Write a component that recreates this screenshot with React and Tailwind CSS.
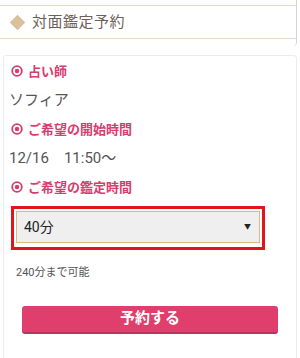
const Label = ({ children }) => (
  <div className="flex items-center h-[20px] pl-[7px] text-[13px] font-bold text-[#d63d6e] leading-none">
    <svg width="12" height="12" viewBox="0 0 12 12" className="mr-[5px]">
      <circle cx="6" cy="6" r="4.8" fill="none" stroke="#d63d6e" strokeWidth="1.8" />
      <circle cx="6" cy="6" r="2.2" fill="#d63d6e" />
    </svg>
    <span>{children}</span>
  </div>
);

export default function App() {
  return (
    <div
      className="w-[300px] h-[358px] bg-white overflow-hidden"
      style={{ fontFamily: "Roboto, 'Noto Sans CJK JP', sans-serif" }}
    >
      {/* page heading block */}
      <div className="pt-[5px] pb-[7px] mr-[3px] border-r border-[#d5d5d5] rounded-br-[4px]">
        <div className="h-[34px] border-t border-b border-[#ead9c2] flex items-center pl-[9px]">
          <div className="w-[11px] h-[11px] bg-[#dcbf9c] rotate-45 ml-[3px] mr-[9px]" />
          <span className="text-[15px] text-[#6e5f5a] tracking-[0.5px]">対面鑑定予約</span>
        </div>
      </div>

      {/* reservation card */}
      <div className="mt-[9px] mx-[3px] h-[310px] border border-[#ececec] rounded-[3px] pt-[5px]">
        <Label>占い師</Label>
        <div className="h-[38px] flex items-center pl-[5px] text-[15px] text-[#555]">ソフィア</div>
        <Label>ご希望の開始時間</Label>
        <div className="h-[38px] flex items-center pl-[5px] text-[15px] text-[#555] whitespace-pre">12/16　11:50～</div>
        <Label>ご希望の鑑定時間</Label>

        <div className="mt-[9px] ml-[7px] w-[254px] border-[3px] border-[#e0161c] p-[2px] pb-[4px]">
          <div className="h-[32px] bg-[#efefef] border border-[#d9bb86] flex items-center justify-between pl-[7px] pr-[8px]">
            <span className="text-[14px] text-[#222]">40分</span>
            <span className="text-[7px] text-[#222]">▼</span>
          </div>
        </div>

        <div className="mt-[15px] pl-[12px] text-[11px] text-[#555]">240分まで可能</div>

        <div className="mt-[24px] mx-[18px] h-[28px] bg-[#e03f6d] rounded-[3px] border-b-2 border-[#b8345a] flex items-center justify-center text-white text-[15px] font-bold">
          予約する
        </div>
      </div>
    </div>
  );
}
